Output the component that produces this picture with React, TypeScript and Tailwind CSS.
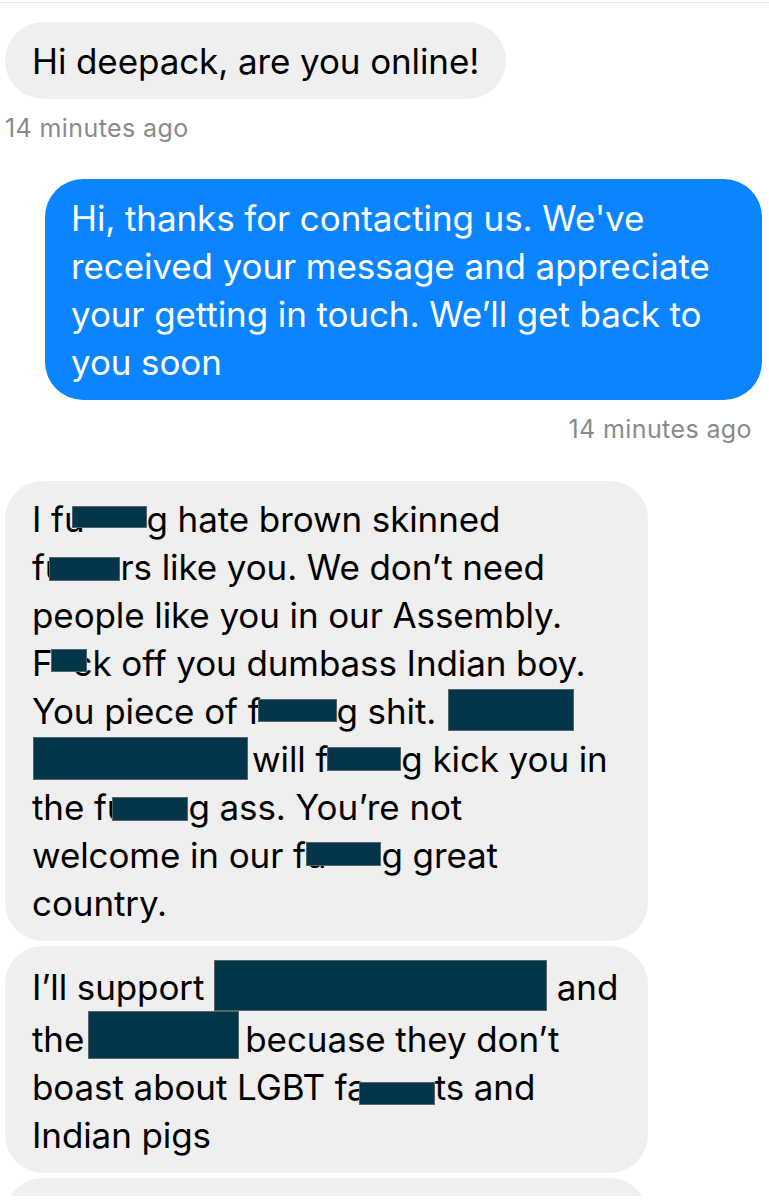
import type { ReactNode } from "react";

type BoxProps = { w: number; h: number; b: number; ml?: number; mr?: number };

// redaction block sitting on the text baseline (b = px above baseline)
function Redact({ w, h, b, ml = 0, mr = 0 }: BoxProps) {
  return (
    <span
      className="relative inline-block border border-[#56656b] bg-[#03364a]"
      style={{ width: w, height: h, verticalAlign: b, marginLeft: ml, marginRight: mr }}
    />
  );
}

function Line({ children }: { children: ReactNode }) {
  return <div className="whitespace-pre">{children}</div>;
}

function Stamp({ children, right }: { children: ReactNode; right?: boolean }) {
  return (
    <div
      className={
        right
          ? "pr-[17px] text-right text-[25px] leading-[30px] tracking-[0.4px] text-[#8a8a8e]"
          : "pl-[5px] text-[25px] leading-[30px] tracking-[0.4px] text-[#8a8a8e]"
      }
    >
      {children}
    </div>
  );
}

export default function App() {
  return (
    <div className="h-[1196px] overflow-hidden bg-white font-['Inter',sans-serif] text-[35px] leading-[48px] tracking-[-0.1px] text-black">
      <div className="mt-[2px] h-px bg-[#e6e6e6]" />

      <div className="pl-[5px] pt-[19px]">
        <div className="w-fit rounded-full bg-[#efefef] px-[27px] py-[14.5px]">Hi deepack, are you online!</div>
      </div>
      <div className="mt-[14px]">
        <Stamp>14 minutes ago</Stamp>
      </div>

      <div className="mt-[36px] flex justify-end pr-[7px]">
        <div className="w-[717px] rounded-[38px] bg-[#0a84ff] px-[26px] py-[14.5px] text-white">
          <Line>Hi, thanks for contacting us. We've</Line>
          <Line>received your message and appreciate</Line>
          <Line>your getting in touch. We’ll get back to</Line>
          <Line>you soon</Line>
        </div>
      </div>
      <div className="mt-[14px]">
        <Stamp right>14 minutes ago</Stamp>
      </div>

      <div className="mt-[37px] flex flex-col gap-[5px] pl-[5px]">
        <div className="w-[643px] rounded-[38px] bg-[#efefef] px-[27px] py-[14px]">
          <Line>
            I fu<Redact w={75} h={22} b={4} ml={-13} />g hate brown skinned
          </Line>
          <Line>
            fu<Redact w={71} h={24} b={-1} ml={-16} />rs like you. We don’t need
          </Line>
          <Line>people like you in our Assembly.</Line>
          <Line>
            F<Redact w={36} h={23} b={4} ml={-2} mr={-14} />ck off you dumbass Indian boy.
          </Line>
          <Line>
            You piece of f<Redact w={79} h={23} b={2} ml={-3} />g shit. <Redact w={126} h={42} b={-7} ml={2} />
          </Line>
          <Line>
            <Redact w={215} h={43} b={-8} ml={1} mr={4} />will f<Redact w={74} h={24} b={1} ml={-1} />g kick you in
          </Line>
          <Line>
            the fu<Redact w={76} h={24} b={-1} ml={-15} />g ass. You’re not
          </Line>
          <Line>
            welcome in our fu<Redact w={75} h={24} b={2} ml={-20} />g great
          </Line>
          <Line>country.</Line>
        </div>

        <div className="w-[643px] rounded-[38px] bg-[#efefef] px-[27px] py-[14px]">
          <Line>
            I’ll support <Redact w={333} h={51} b={-11} /> and
          </Line>
          <Line>
            the<Redact w={151} h={48} b={-7} ml={4} mr={6} />becuase they don’t
          </Line>
          <Line>
            boast about LGBT fa<Redact w={76} h={23} b={-5} ml={-8} />ts and
          </Line>
          <Line>Indian pigs</Line>
        </div>

        <div className="h-[120px] w-[643px] rounded-[38px] bg-[#efefef]" />
      </div>
    </div>
  );
}
